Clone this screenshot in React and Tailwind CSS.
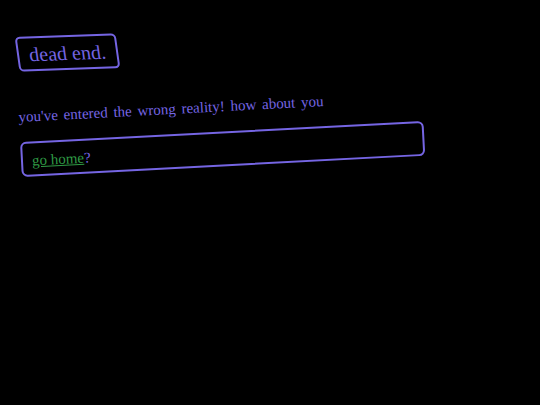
import React from 'react';

// Página de "dead end" — todo en negro con bordes violetas
const App = () => {
  return (
    <div
      className="min-h-screen w-full bg-black pl-[17px] pt-[35px] text-[#7565e3]"
      style={{ fontFamily: '"Liberation Serif", "Times New Roman", serif' }}
    >
      <div className="inline-block rounded-[5px] border-2 border-[#7565e3] px-[10px] pt-[3px] pb-[2px] text-[20px] leading-[26px] rotate-[-2deg] skew-x-[6deg]">
        dead end.
      </div>

      <p className="mt-[37px] ml-[1px] text-[15px] leading-[20px] [word-spacing:2px] origin-top-left rotate-[-3deg]">
        you've entered the wrong reality! how about you
      </p>

      <div className="mt-[15px] ml-[3px] w-[404px] rounded-[6px] border-2 border-[#7565e3] px-[9px] pt-[7px] pb-[4px] text-[15px] leading-[20px] origin-top-left rotate-[-3deg]">
        <a href="#" className="text-[#2f9a45] underline">go home</a>
        <span>?</span>
      </div>
    </div>
  );
};

export default App;
